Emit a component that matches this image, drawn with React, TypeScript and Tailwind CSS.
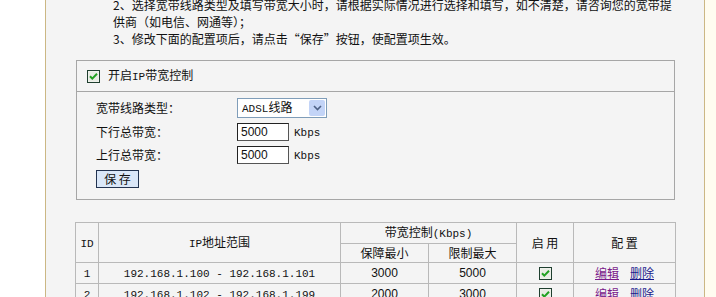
import type { ReactNode } from 'react';

const CJK = "font-['Noto_Sans_CJK_SC',sans-serif]";

function Mono({ children }: { children: ReactNode }) {
  return <span className="font-['Liberation_Mono',monospace] text-[11px]">{children}</span>;
}

function Check() {
  return (
    <svg width="13" height="13" viewBox="0 0 13 13" className="block">
      <rect x="0.5" y="0.5" width="12" height="12" fill="#f4f6f2" stroke="#1f3f2f" />
      <rect x="1.5" y="1.5" width="10" height="10" fill="#e8ece4" />
      <path d="M3 6.2 L5.3 8.6 L10 3.8" fill="none" stroke="#21a121" strokeWidth="2" />
    </svg>
  );
}

const rows = [
  { id: 1, range: '192.168.1.100 - 192.168.1.101', min: 3000, max: 5000 },
  { id: 2, range: '192.168.1.102 - 192.168.1.199', min: 2000, max: 3000 },
];

export default function App() {
  const th = 'border border-[#b9b9b9] font-normal text-center';
  const td = 'border border-[#b9b9b9] text-center h-[21px] p-0';
  const input =
    "w-[52px] h-[18px] bg-white border border-t-[#222] border-l-[#222] border-b-[#555] border-r-[#555] pl-[3px] leading-[16px] font-['Liberation_Sans',sans-serif]";

  return (
    <div className={`w-[716px] h-[297px] overflow-hidden flex bg-white text-[12px] text-[#111] ${CJK}`}>
      <div className="w-[45px] shrink-0 bg-white" />
      <div className="w-px shrink-0 bg-[#cbb784]" />

      <div className="w-[658px] shrink-0 bg-[#f4f4f4]">
        {/* tips */}
        <div className="pl-[67px] -mt-[4px] leading-[17px] whitespace-nowrap">
          <div>2、选择宽带线路类型及填写带宽大小时，请根据实际情况进行选择和填写，如不清楚，请咨询您的宽带提</div>
          <div>供商（如电信、网通等）；</div>
          <div>3、修改下面的配置项后，请点击“保存”按钮，使配置项生效。</div>
        </div>

        {/* settings box */}
        <div className="ml-[30px] mt-[13px] w-[599px] border border-[#a6a6a6]">
          <div className="h-[31px] flex items-center pl-[10px] border-b border-[#a6a6a6]">
            <Check />
            <span className="ml-[8px]">开启<Mono>IP</Mono>带宽控制</span>
          </div>
          <div className="pl-[19px] pt-[4px] pb-[11px]">
            <div className="h-[24px] flex items-center">
              <span className="w-[141px]">宽带线路类型：</span>
              <div className="w-[90px] h-[20px] bg-white border border-[#7f9db9] flex items-center justify-between pl-[4px] pr-px">
                <span><Mono>ADSL</Mono>线路</span>
                <span className="w-[16px] h-[16px] bg-[#c3d4f7] rounded-[2px] flex items-center justify-center">
                  <svg width="9" height="6" viewBox="0 0 9 6">
                    <path d="M1 1 L4.5 4.5 L8 1" fill="none" stroke="#4d6185" strokeWidth="1.6" />
                  </svg>
                </span>
              </div>
            </div>
            <div className="h-[23px] flex items-center">
              <span className="w-[141px]">下行总带宽：</span>
              <div className={input}>5000</div>
              <span className="ml-[5px]"><Mono>Kbps</Mono></span>
            </div>
            <div className="h-[23px] flex items-center">
              <span className="w-[141px]">上行总带宽：</span>
              <div className={input}>5000</div>
              <span className="ml-[5px]"><Mono>Kbps</Mono></span>
            </div>
            <button className="mt-[4px] w-[43px] h-[18px] bg-[#dae7f8] border border-[#223350] flex items-center justify-center leading-none">
              保&nbsp;存
            </button>
          </div>
        </div>

        {/* rule table */}
        <table className="ml-[29px] mt-[22px] w-[600px] border-collapse table-fixed">
          <colgroup>
            <col className="w-[23px]" />
            <col className="w-[242px]" />
            <col className="w-[88px]" />
            <col className="w-[88px]" />
            <col className="w-[57px]" />
            <col className="w-[102px]" />
          </colgroup>
          <thead>
            <tr className="h-[21px]">
              <th rowSpan={2} className={th}><Mono>ID</Mono></th>
              <th rowSpan={2} className={th}><Mono>IP</Mono>地址范围</th>
              <th colSpan={2} className={th}>带宽控制<Mono>(Kbps)</Mono></th>
              <th rowSpan={2} className={th}>启&nbsp;用</th>
              <th rowSpan={2} className={th}>配&nbsp;置</th>
            </tr>
            <tr className="h-[19px]">
              <th className={th}>保障最小</th>
              <th className={th}>限制最大</th>
            </tr>
          </thead>
          <tbody>
            {rows.map((r) => (
              <tr key={r.id}>
                <td className={td}><Mono>{r.id}</Mono></td>
                <td className={td}><Mono>{r.range}</Mono></td>
                <td className={`${td} font-['Liberation_Sans',sans-serif]`}>{r.min}</td>
                <td className={`${td} font-['Liberation_Sans',sans-serif]`}>{r.max}</td>
                <td className={td}>
                  <div className="flex justify-center"><Check /></div>
                </td>
                <td className={td}>
                  <a className="underline text-[#7a1a8a]">编辑</a>
                  <a className="underline text-[#1a1a8c] ml-[11px]">删除</a>
                </td>
              </tr>
            ))}
          </tbody>
        </table>
      </div>

      <div className="w-px shrink-0 bg-[#cbb784]" />
      <div className="flex-1 bg-[#fffcf0]" />
    </div>
  );
}
